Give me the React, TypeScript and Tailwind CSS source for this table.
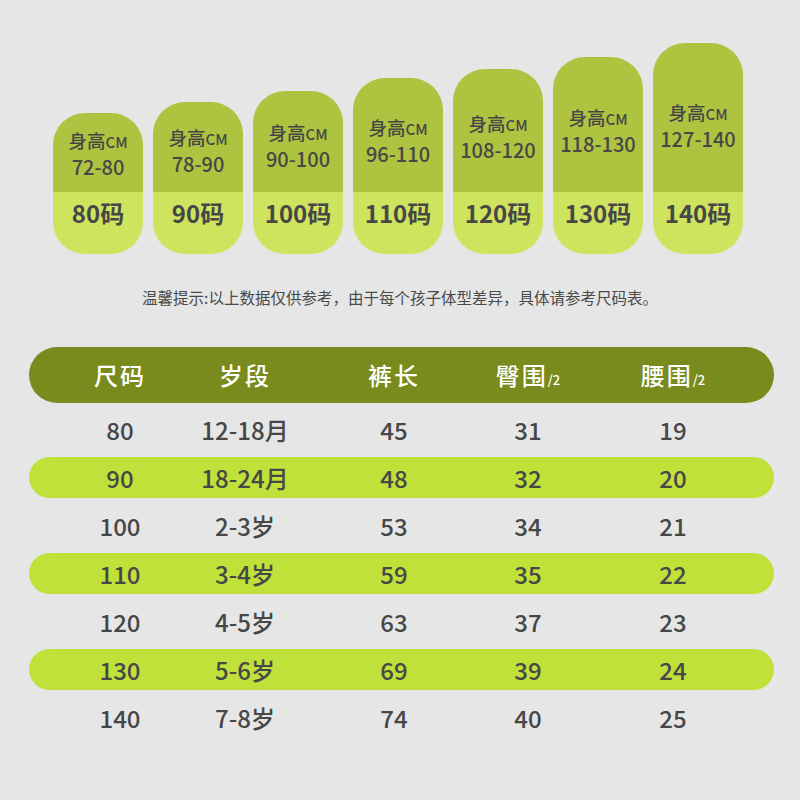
import React from "react";

const cards = [
  { range: "72-80", size: "80码", h: "h-[141px]", pt: "pt-[15px]" },
  { range: "78-90", size: "90码", h: "h-[152px]", pt: "pt-[23px]" },
  { range: "90-100", size: "100码", h: "h-[163px]", pt: "pt-[29px]" },
  { range: "96-110", size: "110码", h: "h-[176px]", pt: "pt-[37px]" },
  { range: "108-120", size: "120码", h: "h-[185px]", pt: "pt-[42px]" },
  { range: "118-130", size: "130码", h: "h-[197px]", pt: "pt-[48px]" },
  { range: "127-140", size: "140码", h: "h-[211px]", pt: "pt-[57px]" },
];

const rows = [
  ["80", "12-18月", "45", "31", "19"],
  ["90", "18-24月", "48", "32", "20"],
  ["100", "2-3岁", "53", "34", "21"],
  ["110", "3-4岁", "59", "35", "22"],
  ["120", "4-5岁", "63", "37", "23"],
  ["130", "5-6岁", "69", "39", "24"],
  ["140", "7-8岁", "74", "40", "25"],
];

// cell widths so the column centres line up with the picture
const cols = ["w-[100px]", "w-[150px]", "w-[148px]", "w-[120px]", "w-[170px]"];

function SizeCard({ range, size, h, pt }: (typeof cards)[number]) {
  return (
    <div className={`flex w-[90px] flex-col overflow-hidden rounded-[32px] ${h}`}>
      <div className={`flex flex-1 flex-col items-center bg-[#aec340] ${pt}`}>
        <div className="flex h-[24px] items-baseline leading-[24px]">
          <span className="text-[18.5px] font-medium">身高</span>
          <span className="text-[15px] font-medium">CM</span>
        </div>
        <div className="text-[20px] leading-[30px] font-medium">{range}</div>
      </div>
      <div className="flex h-[62px] justify-center bg-[#cee35e] pt-[6px]">
        <span className="text-[24px] leading-[30px] font-semibold">{size}</span>
      </div>
    </div>
  );
}

export default function App() {
  return (
    <div
      className="h-[800px] w-[800px] overflow-hidden bg-[#e6e6e6] pt-[43px] text-[#474747]"
      style={{ fontFamily: '"Noto Sans CJK SC", "Noto Sans", sans-serif' }}
    >
      {/* size cards */}
      <div className="ml-[53px] flex h-[211px] items-end gap-[10px]">
        {cards.map((c) => (
          <SizeCard key={c.size} {...c} />
        ))}
      </div>

      <p className="mt-[33px] text-center text-[15.5px] leading-[20px] text-[#4a4a4a]">
        温馨提示:以上数据仅供参考，由于每个孩子体型差异，具体请参考尺码表。
      </p>

      {/* size table */}
      <div className="ml-[29px] mt-[40px] w-[745px]">
        <div className="flex h-[56px] items-center rounded-full bg-[#788b1c] pl-[41px] text-white">
          <div className={`${cols[0]} text-center text-[24px] font-medium tracking-[2px]`}>尺码</div>
          <div className={`${cols[1]} text-center text-[24px] font-medium tracking-[2px]`}>岁段</div>
          <div className={`${cols[2]} text-center text-[24px] font-medium tracking-[2px]`}>裤长</div>
          <div className={`${cols[3]} flex items-baseline justify-center text-[24px] font-medium tracking-[2px]`}>
            臀围<span className="text-[13px] tracking-normal">/2</span>
          </div>
          <div className={`${cols[4]} flex items-baseline justify-center text-[24px] font-medium tracking-[2px]`}>
            腰围<span className="text-[13px] tracking-normal">/2</span>
          </div>
        </div>

        <div className="mt-[6px] flex flex-col gap-[7px]">
          {rows.map((r, i) => (
            <div
              key={r[0]}
              className={`flex h-[41px] items-center rounded-full pl-[41px] text-[24px] leading-none font-medium ${
                i % 2 === 1 ? "bg-[#c0e03a]" : ""
              }`}
            >
              {r.map((v, j) => (
                <div key={j} className={`${cols[j]} text-center`}>
                  {v}
                </div>
              ))}
            </div>
          ))}
        </div>
      </div>
    </div>
  );
}
